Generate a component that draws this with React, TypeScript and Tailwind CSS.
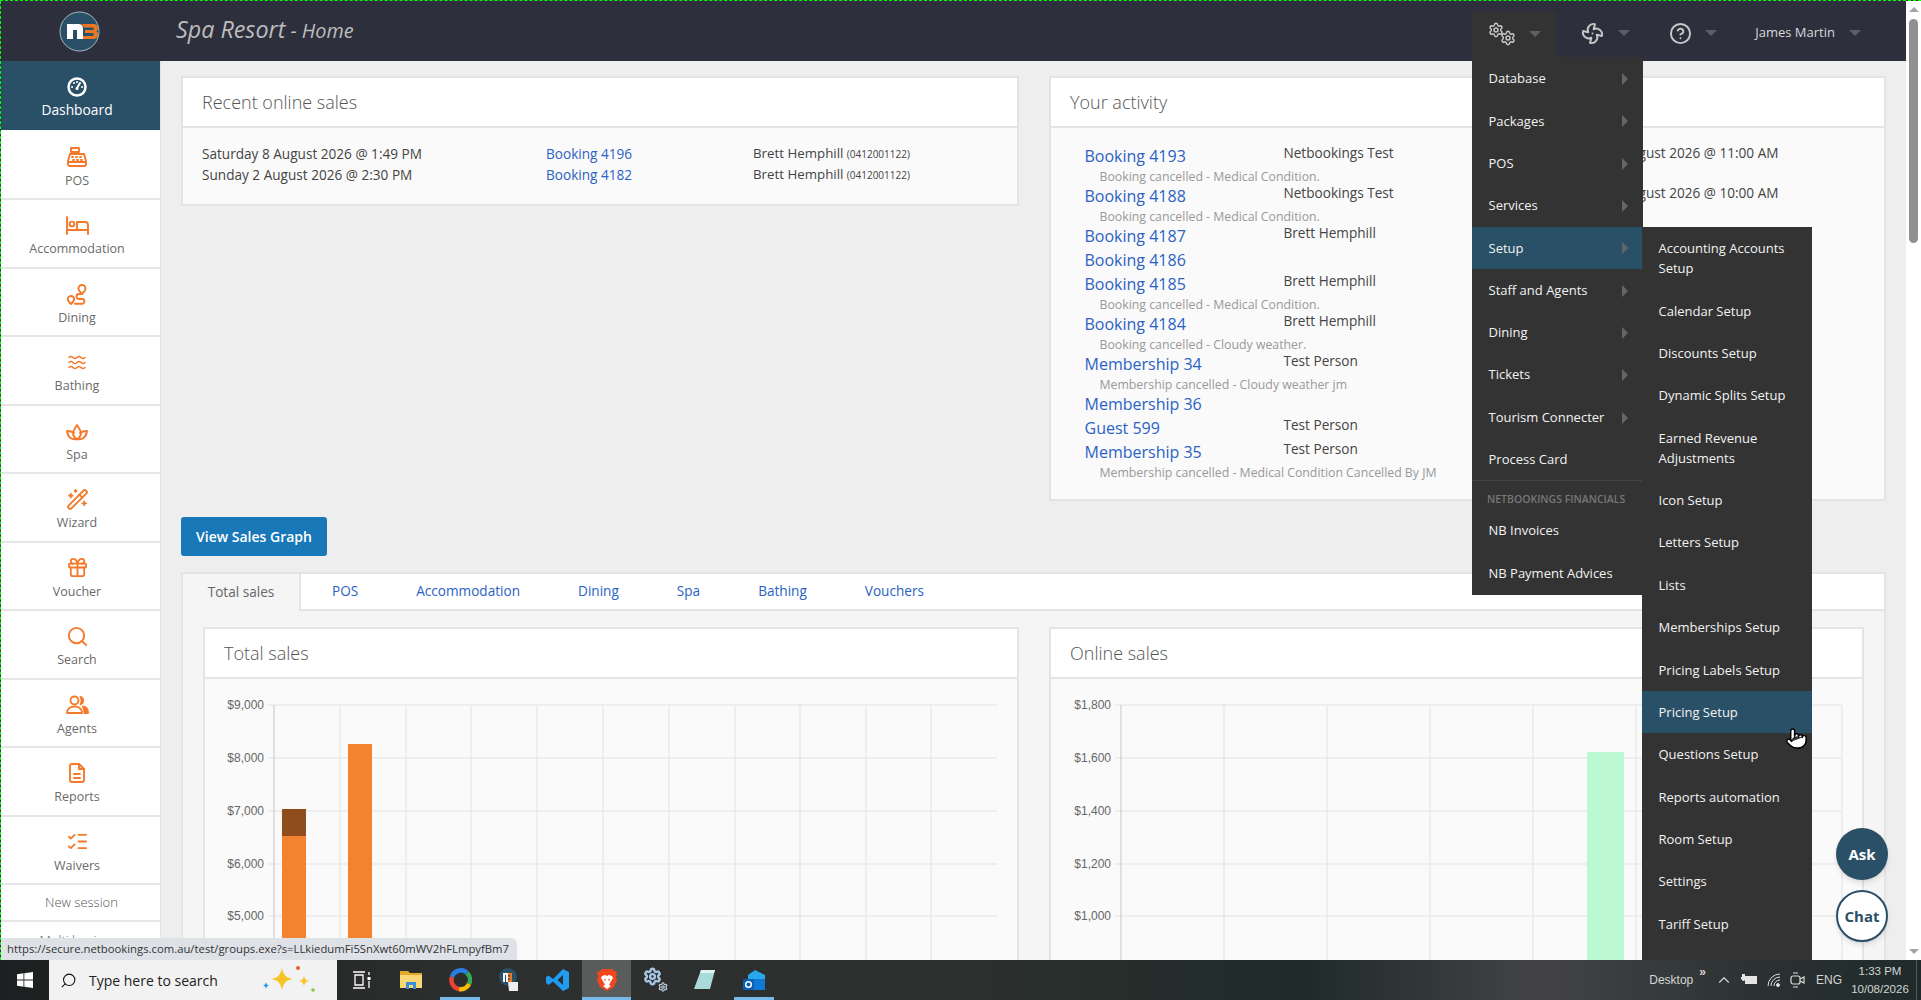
import {
  ChevronUp,
  CircleHelp,
  Fan,
  Gift,
  ListChecks,
  Pointer,
  Search,
  Settings,
  WandSparkles,
} from "lucide-react";
import type { ReactNode } from "react";

const ORANGE = "#f5792a";

function Icon({ children, w = 24, h = 24 }: { children: ReactNode; w?: number; h?: number }) {
  return (
    <svg
      width={w}
      height={h}
      viewBox={`0 0 ${w} ${h}`}
      fill="none"
      stroke={ORANGE}
      strokeWidth="1.9"
      strokeLinecap="round"
      strokeLinejoin="round"
    >
      {children}
    </svg>
  );
}

const wave = "c1.500-1.500 2.500-1.500 4 0s2.500 1.500 4 0 2.500-1.500 4 0 2.500 1.500 4 0";

const sideItems: { label: string; icon: ReactNode }[] = [
  {
    label: "POS",
    icon: (
      <Icon>
        <path d="M6 3h8v4H6zM10 7v2" />
        <path d="M5 9h14l2 7v3a2 2 0 0 1-2 2H5a2 2 0 0 1-2-2v-3z" />
        <path d="M3 17h18M7 12h1M11 12h1M15 12h1M8 15h1M12 15h1M16 15h1" />
      </Icon>
    ),
  },
  {
    label: "Accommodation",
    icon: (
      <Icon>
        <path d="M2 4v17M2 17h21v4M23 17v-5a3 3 0 0 0-3-3h-8v8" />
        <circle cx="7" cy="11" r="2.4" />
      </Icon>
    ),
  },
  {
    label: "Dining",
    icon: (
      <Icon>
        <path d="M17 3a3.5 3.5 0 0 1 3.5 3.5c0 2-3.500 5.500-3.500 5.500s-3.500-3.500-3.500-5.500A3.500 3.500 0 0 1 17 3z" />
        <path d="M6 14a3.200 3.200 0 0 1 3.200 3.200c0 1.800-3.200 4.800-3.200 4.800s-3.200-3-3.200-4.800A3.200 3.200 0 0 1 6 14z" />
        <path d="M17 12h-3a2.500 2.500 0 0 0 0 5h3a2 2 0 0 1 0 4.800h-7" />
      </Icon>
    ),
  },
  {
    label: "Bathing",
    icon: (
      <Icon w={21} h={15}>
        <path strokeWidth="1.400" d={`M2 2.500${wave}`} />
        <path strokeWidth="1.400" d={`M2 7.500${wave}`} />
        <path strokeWidth="1.400" d={`M2 12.500${wave}`} />
      </Icon>
    ),
  },
  {
    label: "Spa",
    icon: (
      <Icon>
        <path d="M12 20c-4-2-5-6-3-9l3-5 3 5c2 3 1 7-3 9z" />
        <path d="M12 20c-5 1-9-1-10-8 2 0 5 .500 7 2M12 20c5 1 9-1 10-8-2 0-5 .500-7 2" />
      </Icon>
    ),
  },
  { label: "Wizard", icon: <WandSparkles size={23} color={ORANGE} strokeWidth={1.900} /> },
  { label: "Voucher", icon: <Gift size={23} color={ORANGE} strokeWidth={1.900} /> },
  { label: "Search", icon: <Search size={23} color={ORANGE} strokeWidth={2} /> },
  {
    label: "Agents",
    icon: (
      <Icon>
        <circle cx="9.500" cy="7.500" r="4" />
        <path d="M2 20c0-4 3-6.500 7.500-6.500S17 16 17 20z" />
        <path fill={ORANGE} d="M15.500 3.800a4 4 0 0 1 0 7.500c1.500-2 1.500-5.500 0-7.500zM18 13.500c3 .500 5 3 5 6.500h-3.500c0-2.500-.500-4.500-1.500-6.500z" />
      </Icon>
    ),
  },
  {
    label: "Reports",
    icon: (
      <Icon>
        <path d="M7 3h7l5 5v11a2 2 0 0 1-2 2H7a2 2 0 0 1-2-2V5a2 2 0 0 1 2-2z" />
        <path d="M14 3v5h5M9 13h6M9 17h6" />
      </Icon>
    ),
  },
  { label: "Waivers", icon: <ListChecks size={23} color={ORANGE} strokeWidth={1.900} /> },
];

const activity = [
  { link: "Booking 4193", name: "Netbookings Test", date: "8 August 2026 @ 11:00 AM", note: "Booking cancelled - Medical Condition." },
  { link: "Booking 4188", name: "Netbookings Test", date: "8 August 2026 @ 10:00 AM", note: "Booking cancelled - Medical Condition." },
  { link: "Booking 4187", name: "Brett Hemphill" },
  { link: "Booking 4186" },
  { link: "Booking 4185", name: "Brett Hemphill", note: "Booking cancelled - Medical Condition." },
  { link: "Booking 4184", name: "Brett Hemphill", note: "Booking cancelled - Cloudy weather." },
  { link: "Membership 34", name: "Test Person", note: "Membership cancelled - Cloudy weather jm" },
  { link: "Membership 36" },
  { link: "Guest 599", name: "Test Person" },
  { link: "Membership 35", name: "Test Person", note: "Membership cancelled - Medical Condition Cancelled By JM" },
];

const menuItems = ["Database", "Packages", "POS", "Services", "Setup", "Staff and Agents", "Dining", "Tickets", "Tourism Connecter"];

const setupItems = [
  "Accounting Accounts Setup",
  "Calendar Setup",
  "Discounts Setup",
  "Dynamic Splits Setup",
  "Earned Revenue Adjustments",
  "Icon Setup",
  "Letters Setup",
  "Lists",
  "Memberships Setup",
  "Pricing Labels Setup",
  "Pricing Setup",
  "Questions Setup",
  "Reports automation",
  "Room Setup",
  "Settings",
  "Tariff Setup",
];

const tabs = ["POS", "Accommodation", "Dining", "Spa", "Bathing", "Vouchers"];

function Caret() {
  return <span className="h-0 w-0 border-x-[6px] border-t-[6px] border-x-transparent border-t-[#5c5e68]" />;
}

function Panel({ title, children, className = "" }: { title: string; children: ReactNode; className?: string }) {
  return (
    <div className={`border-2 border-[#e4e4e4] bg-[#fafafa] ${className}`}>
      <div className="flex h-[50px] items-center border-b-2 border-[#e4e4e4] bg-white pl-[19px] text-[18px] font-light text-[#555]">
        {title}
      </div>
      {children}
    </div>
  );
}

function Chart({
  labels,
  xs,
  right,
  bars,
}: {
  labels: string[];
  xs: number[];
  right: number;
  bars: { x: number; w: number; top: number; bottom: number; fill: string }[];
}) {
  const ys = [26, 79, 132, 185, 237];
  return (
    <svg width="812" height="290" className="block">
      {ys.map((y, i) => (
        <g key={y}>
          <line x1={xs[0] - 6} x2={right} y1={y} y2={y} stroke="#e2e2e2" />
          <text x={xs[0] - 10} y={y + 4} textAnchor="end" fontSize="12" fill="#666" fontFamily="'Liberation Sans', sans-serif">
            {labels[i]}
          </text>
        </g>
      ))}
      {xs.map((x, i) => (
        <line key={x} x1={x} x2={x} y1={26} y2={290} stroke={i === 0 ? "#c6c6c6" : "#e2e2e2"} />
      ))}
      {bars.map((b) => (
        <rect key={b.top} x={b.x} y={b.top} width={b.w} height={b.bottom - b.top} fill={b.fill} />
      ))}
    </svg>
  );
}

function TaskSlot({ children, on, active }: { children: ReactNode; on?: boolean; active?: boolean }) {
  return (
    <div className={`relative flex h-full w-[49px] items-center justify-center ${active ? "bg-[#5a5c5c]" : ""}`}>
      {children}
      {on && <span className={`absolute bottom-0 h-[3px] bg-[#76b9ed] ${active ? "inset-x-0" : "left-[5px] right-[4px]"}`} />}
    </div>
  );
}

export default function App() {
  return (
    <div className="flex h-screen w-full flex-col overflow-hidden font-['Open_Sans',sans-serif]">
      <div className="flex min-h-0 flex-1 border-t border-dashed border-[#00ff00] bg-[#2d2f3c]">
        <div className="relative flex min-w-0 flex-1 flex-col overflow-hidden border-l border-dashed border-[#00ff00]">
          {/* top bar */}
          <header className="flex h-[60px] shrink-0 items-center bg-[#2d2f3c]">
            <div className="flex w-[157px] justify-center">
              <svg width="41" height="41" viewBox="0 0 41 41">
                <circle cx="20.500" cy="20.500" r="19.500" fill="#2a5068" stroke="#a9b8c2" />
                <path fill="#fff" d="M8 13h11q5 0 5 5v10h-6V19h-4v9H8z" />
                <path
                  fill="#f07722"
                  d="M22 13h12q5 0 5 4 0 2-1.500 3 1.500 1 1.500 4 0 4-5 4H24v-3h9q2 0 2-1.500T33 22h-7v-3h7q2 0 2-1.200T33 16.500h-8q-1-2-3-3.500z"
                />
              </svg>
            </div>
            <div className="-mt-[3px] ml-[18px] italic text-[#bdbdbd]">
              <span className="text-[23.300px]">Spa Resort</span>
              <span className="text-[19.800px]"> - Home</span>
            </div>
            <div className="ml-auto flex h-full items-center pr-[45px] pt-[4px]">
              <div className="-mt-[4px] flex h-[50px] w-[84px] items-center gap-[13px] self-end bg-[#333333] pl-[16px] pb-[5px]">
                <svg width="28" height="24" viewBox="0 0 28 24">
                  <Settings x={0} y={0} size={16} color="#c8c8c8" strokeWidth={2.200} />
                  <Settings x={12} y={8} size={16} color="#c8c8c8" strokeWidth={2.200} />
                </svg>
                <Caret />
              </div>
              <div className="flex w-[87px] items-center gap-[14px] pl-[25px]">
                <Fan size={23} color="#c8c8c8" strokeWidth={2} />
                <Caret />
              </div>
              <div className="flex w-[87px] items-center gap-[13px] pl-[26px]">
                <CircleHelp size={23} color="#c8c8c8" strokeWidth={2} />
                <Caret />
              </div>
              <div className="flex items-center gap-[14px] pl-[25px]">
                <span className="text-[13px] text-[#d8d8d8]">James Martin</span>
                <Caret />
              </div>
            </div>
          </header>

          <div className="flex min-h-0 flex-1">
            {/* sidebar */}
            <nav className="w-[160px] shrink-0 overflow-hidden border-r border-[#e4e2e8] bg-white">
              <div className="mb-[1.500px] flex h-[69px] flex-col items-center justify-center gap-[3px] bg-[#2a5068] pr-[7px] pt-[7px] text-[13.800px] text-white">
                <svg width="20" height="20" viewBox="0 0 20 20">
                  <circle cx="10" cy="10" r="8.500" fill="#2a5068" stroke="#fff" strokeWidth="2.500" />
                  <path stroke="#fff" strokeWidth="2" strokeLinecap="round" d="M10 11l3-5M5 10h.1M7 6h.1M10 5h.1M15 10h.1" />
                  <circle cx="10" cy="11.500" r="1.500" fill="#fff" />
                </svg>
                Dashboard
              </div>
              {sideItems.map((item) => (
                <div
                  key={item.label}
                  className="flex h-[68.500px] flex-col items-center justify-center gap-[2px] border-b-2 border-[#e6e6e6] pr-[7px] pt-[4px] text-[12.500px] leading-[18px] text-[#6a6a6a]"
                >
                  <span className="flex h-[26px] items-center">{item.icon}</span>
                  {item.label}
                </div>
              ))}
              <div className="flex h-[37px] items-center justify-center border-b-2 border-[#e6e6e6] pl-[2px] text-[13px] font-light text-[#555]">
                New session
              </div>
              <div className="flex h-[37px] items-center justify-center pl-[2px] text-[13px] font-light text-[#555]">
                Multi business
              </div>
            </nav>

            {/* main */}
            <main className="min-w-0 flex-1 overflow-hidden bg-[#eeeeee] pl-[20px] pr-[20px] pt-[15px]">
              <div className="grid grid-cols-[838px_837px] items-start gap-[30px]">
                <Panel title="Recent online sales" className="h-[130px]">
                  <div className="pl-[19px] pt-[15px] text-[13.600px] text-[#444]">
                    {[
                      ["Saturday 8 August 2026 @ 1:49 PM", "Booking 4196"],
                      ["Sunday 2 August 2026 @ 2:30 PM", "Booking 4182"],
                    ].map(([date, link]) => (
                      <div key={link} className="grid h-[21px] grid-cols-[344px_207px_1fr] items-center leading-none">
                        <span>{date}</span>
                        <span className="text-[#2b62c4]">{link}</span>
                        <span className="text-[13.300px]">
                          Brett Hemphill <span className="text-[10px]">(0412001122)</span>
                        </span>
                      </div>
                    ))}
                  </div>
                </Panel>
                <Panel title="Your activity" className="h-[425px]">
                  <div className="pl-[33.500px] pt-[16px]">
                    {activity.map((row) => (
                      <div key={row.link}>
                        <div className="grid h-[24px] grid-cols-[199px_220px_275px] items-center">
                          <span className="text-[16px] text-[#2b62c4]">{row.link}</span>
                          <span className="-mt-[5px] text-[13.600px] text-[#444]">{row.name}</span>
                          <span className="-mt-[5px] whitespace-nowrap text-right text-[13.600px] text-[#444]">{row.date}</span>
                        </div>
                        {row.note && <div className="h-[16px] pl-[15px] text-[12.300px] leading-[18px] text-[#999]">{row.note}</div>}
                      </div>
                    ))}
                  </div>
                </Panel>
              </div>

              <button className="mt-[16px] block h-[39px] w-[146px] rounded-[3px] bg-[#1878b8] text-[14px] font-semibold text-white">
                View Sales Graph
              </button>

              <div className="mt-[16px] border-x-2 border-t-2 border-[#e4e4e4] bg-[#f5f5f5]">
                <div className="flex h-[37px] items-center border-b-2 border-[#e4e4e4] bg-white text-[13.600px] text-[#2b62c4]">
                  <div className="-mb-[2px] flex h-[37px] w-[118px] items-center justify-center border-r-2 border-[#e4e4e4] bg-[#f5f5f5] text-[#666]">
                    Total sales
                  </div>
                  <div className="w-[2px]" />
                  {tabs.map((t) => (
                    <div key={t} className="px-[29px]">
                      {t}
                    </div>
                  ))}
                </div>
                <div className="grid grid-cols-[816px_815px] gap-[30px] pl-[20px] pt-[16px]">
                  <Panel title="Total sales">
                    <Chart
                      labels={["$9,000", "$8,000", "$7,000", "$6,000", "$5,000"]}
                      xs={[69, 135, 201, 266, 332, 398, 464, 530, 595, 661, 726]}
                      right={792}
                      bars={[
                        { x: 77, w: 24, top: 130, bottom: 157, fill: "#8f4c1c" },
                        { x: 77, w: 24, top: 157, bottom: 290, fill: "#f48330" },
                        { x: 143, w: 24, top: 65, bottom: 290, fill: "#f48330" },
                      ]}
                    />
                  </Panel>
                  <Panel title="Online sales">
                    <Chart
                      labels={["$1,800", "$1,600", "$1,400", "$1,200", "$1,000"]}
                      xs={[70, 173, 276, 379, 482, 585, 688, 791]}
                      right={791}
                      bars={[{ x: 536, w: 37, top: 73, bottom: 290, fill: "#bcf8d4" }]}
                    />
                  </Panel>
                </div>
              </div>
            </main>
          </div>

          {/* settings dropdown */}
          <div className="absolute left-[1471px] top-[56px] w-[171px] bg-[#333333] pt-[1px] text-[13px] text-[#f2f2f2]">
            {menuItems.map((m) => (
              <div
                key={m}
                className={`flex h-[42.300px] items-center justify-between pl-[16.500px] pr-[15px] ${m === "Setup" ? "bg-[#2a5068]" : ""}`}
              >
                {m}
                <span className="h-0 w-0 border-y-[6px] border-l-[6px] border-y-transparent border-l-[#666]" />
              </div>
            ))}
            <div className="flex h-[42.300px] items-center border-b border-[#444] pl-[16.500px]">Process Card</div>
            <div className="flex h-[29px] items-center pl-[15px] pt-[8px] text-[10.500px] font-semibold uppercase text-[#777]">
              Netbookings financials
            </div>
            <div className="flex h-[42.300px] items-center pl-[16.500px]">NB Invoices</div>
            <div className="flex h-[42.300px] items-center pl-[16.500px]">NB Payment Advices</div>
          </div>
          <div className="absolute left-[1641px] top-[226px] w-[170px] bg-[#333333] pb-[30px] text-[13px] leading-[20px] text-[#f2f2f2]">
            {setupItems.map((s) => (
              <div key={s} className={`py-[11.200px] pl-[16.500px] pr-[10px] ${s === "Pricing Setup" ? "bg-[#2a5068]" : ""}`}>
                {s}
              </div>
            ))}
          </div>
          <Pointer className="absolute left-[1784px] top-[726px]" size={23} fill="#fff" color="#000" strokeWidth={1.500} />

          {/* floating buttons */}
          <div className="absolute left-[1835px] top-[827px] flex h-[52px] w-[52px] items-center justify-center rounded-full bg-[#2a5068] text-[15px] font-bold text-white shadow-md">
            Ask
          </div>
          <div className="absolute left-[1835px] top-[889px] flex h-[52px] w-[52px] items-center justify-center rounded-full border-2 border-[#2a5068] bg-white text-[15px] font-bold text-[#2a5068] shadow-md">
            Chat
          </div>

          {/* link status */}
          <div className="absolute bottom-0 left-0 flex h-[22px] w-[516px] items-center overflow-hidden whitespace-nowrap rounded-tr-md bg-[#dee1e6] pl-[6px] text-[11.300px] text-[#333]">
            https://secure.netbookings.com.au/test/groups.exe?s=LLkiedumFi5SnXwt60mWV2hFLmpyfBm7
          </div>
        </div>

        {/* page scrollbar */}
        <div className="flex w-[15px] shrink-0 flex-col items-center bg-white">
          <span className="mt-[6px] h-0 w-0 border-x-[5px] border-b-[5px] border-x-transparent border-b-[#a3a3a3]" />
          <span className="mt-[7px] h-[224px] w-[9px] rounded-full bg-[#909090]" />
          <span className="mt-auto mb-[6px] h-0 w-0 border-x-[5px] border-t-[5px] border-x-transparent border-t-[#a3a3a3]" />
        </div>
      </div>

      {/* windows taskbar */}
      <footer className="flex h-[40px] shrink-0 items-center bg-[linear-gradient(90deg,#1d2020_0%,#2d2f2e_25%,#2c302f_50%,#1f2b29_68%,#434346_80%,#2a3231_92%,#1f2a2a_100%)] font-['Liberation_Sans',sans-serif] text-white">
        <div className="flex h-full w-[49px] items-center justify-center">
          <svg width="16" height="16" viewBox="0 0 16 16" fill="#fff">
            <path d="M0 2.200l6.500-.9v6.300H0zM7.300 1.200L16 0v7.600H7.300zM0 8.400h6.500v6.300L0 13.800zM7.300 8.400H16V16l-8.700-1.200z" />
          </svg>
        </div>
        <div className="flex h-full w-[288px] items-center bg-[#f2f2f2] pl-[11px] text-[14px] text-[#222]">
          <Search size={17} color="#111" strokeWidth={1.500} className="-scale-x-100" />
          <span className="ml-[12px] font-['Open_Sans',sans-serif]">Type here to search</span>
          <svg width="62" height="30" viewBox="0 0 62 30" className="ml-[38px]">
            <path fill="#f7c325" d="M26 3c1.500 7 4 10 11 11-7 1-9.500 4-11 11-1.500-7-4-10-11-11 7-1 9.500-4 11-11z" />
            <path fill="#f7c325" d="M48 11c.7 3 2 4.500 5 5-3 .5-4.300 2-5 5-.7-3-2-4.500-5-5 3-.5 4.300-2 5-5z" />
            <path fill="#1e9be8" d="M10 17c.4 2 1 3 3 3.500-2 .5-2.600 1.500-3 3.500-.4-2-1-3-3-3.500 2-.5 2.600-1.500 3-3.500z" />
            <circle cx="42" cy="3" r="2" fill="#e2602c" />
            <circle cx="57" cy="25" r="1.800" fill="#8bc34a" />
          </svg>
        </div>

        <TaskSlot>
          <svg width="20" height="20" viewBox="0 0 20 20" fill="none" stroke="#fff" strokeWidth="1.300">
            <path d="M1 2h12M1 18h12M3 5h8v10H3zM17 2v3M17 11v7" />
            <rect x="15.500" y="7" width="3" height="3" fill="#fff" stroke="none" />
          </svg>
        </TaskSlot>
        <TaskSlot>
          <svg width="22" height="20" viewBox="0 0 22 20">
            <path fill="#e3a92b" d="M0 1h8l2 2h12v15H0z" />
            <path fill="#f7d874" d="M0 5h22v13H0z" />
            <path fill="#3a8fd8" d="M6 12h10v7h-3v-4H9v4H6z" />
          </svg>
        </TaskSlot>
        <TaskSlot on>
          <svg width="24" height="24" viewBox="0 0 24 24" fill="none" strokeWidth="4.500">
            <path stroke="#2a7de1" d="M4 9A9 9 0 0 1 19 5" />
            <path stroke="#34a853" d="M19 5a9 9 0 0 1 2 11" />
            <path stroke="#fbbc05" d="M21 16a9 9 0 0 1-10 5" />
            <path stroke="#ea4335" d="M11 21A9 9 0 0 1 4 9" />
            <circle cx="12" cy="12" r="3.500" stroke="#2a2d2c" strokeWidth="2" />
          </svg>
        </TaskSlot>
        <TaskSlot>
          <svg width="22" height="26" viewBox="0 0 22 26">
            <circle cx="10" cy="10" r="9" fill="#2a5068" />
            <path fill="#fff" d="M5 6h5v9H8V8H7v7H5z" />
            <path fill="#f07722" d="M10 6h4v9h-4v-2h2v-1.500h-2v-2h2V8h-2z" />
            <path fill="#eee" d="M10 15h10v9H11z" />
          </svg>
        </TaskSlot>
        <TaskSlot>
          <svg width="24" height="24" viewBox="0 0 24 24">
            <path fill="#1f9cf0" d="M17 1l6 3v16l-6 3-10-9.500-4.500 3.500L0 15V9l2.500-1.500L7 11zm0 6l-5.500 5 5.500 5z" />
          </svg>
        </TaskSlot>
        <TaskSlot on active>
          <svg width="20" height="24" viewBox="0 0 20 24">
            <path fill="#f1461f" d="M5 1h10l2 2 3 1-1 5 1 3-3 7-7 4-7-4-3-7 1-3-1-5 3-1z" />
            <path fill="#fff" d="M5 8l3-1 2 1 2-1 3 1 1 2-3 5-1 2 2 1-4 3-4-3 2-1-1-2-3-5z" />
            <path fill="#f1461f" d="M7 11h2l-1 2zM11 11h2l-1 2z" />
          </svg>
        </TaskSlot>
        <TaskSlot>
          <svg width="26" height="26" viewBox="0 0 26 26">
            <Settings x={0} y={0} size={19} color="#a8c8e8" strokeWidth={3} />
            <Settings x={15} y={15} size={10} color="#b8c8d8" strokeWidth={3} />
          </svg>
        </TaskSlot>
        <TaskSlot>
          <svg width="24" height="24" viewBox="0 0 24 24">
            <path fill="#a9dcd8" d="M8 2h14l-5 19H1z" />
            <path fill="#dff3f1" d="M8 2h14l-1 3H7z" />
          </svg>
        </TaskSlot>
        <TaskSlot on>
          <svg width="24" height="24" viewBox="0 0 24 24">
            <path fill="#28a8ea" d="M6 7l7-5 10 5v12H6z" />
            <path fill="#0f78d4" d="M6 11h17v11H6z" />
            <rect x="1" y="11" width="11" height="11" rx="1.500" fill="#0a5fb4" />
            <circle cx="6.500" cy="16.500" r="2.800" fill="none" stroke="#fff" strokeWidth="1.500" />
          </svg>
        </TaskSlot>

        <div className="ml-auto flex h-full items-center pr-[4px] text-[12px] text-[#d5d5d5]">
          <span>Desktop</span>
          <span className="ml-[6px] -mt-[16px] text-[12px] font-bold leading-none">»</span>
          <ChevronUp size={18} strokeWidth={1.500} className="ml-[9px]" />
          <svg width="16" height="14" viewBox="0 0 16 14" className="ml-[8px]" fill="#e5e5e5">
            <rect x="4" y="3" width="12" height="8" />
            <path d="M1 1v3h3V1zM0 4h5v2L3 8H2L0 6z" />
          </svg>
          <svg width="16" height="16" viewBox="0 0 16 16" className="ml-[9px]" fill="none" stroke="#ddd" strokeWidth="1">
            <path d="M2 14a12 12 0 0 1 12-12M5 14a9 9 0 0 1 9-9M8 14a6 6 0 0 1 6-6" />
            <circle cx="12" cy="13" r="1.500" fill="#ddd" />
          </svg>
          <svg width="16" height="18" viewBox="0 0 16 18" className="ml-[8px]" fill="none" stroke="#ddd" strokeWidth="1.200">
            <rect x="1" y="5" width="9" height="8" rx="2" />
            <path d="M10 8l4-2v6l-4-2M3 2h5M3 16h5" />
          </svg>
          <span className="ml-[10px]">ENG</span>
          <div className="ml-[13px] flex w-[50px] flex-col items-center text-[11.500px] leading-[18px]">
            <span>1:33 PM</span>
            <span>10/08/2026</span>
          </div>
          <span className="ml-[11px] h-full w-px bg-[#555]" />
        </div>
      </footer>
    </div>
  );
}
